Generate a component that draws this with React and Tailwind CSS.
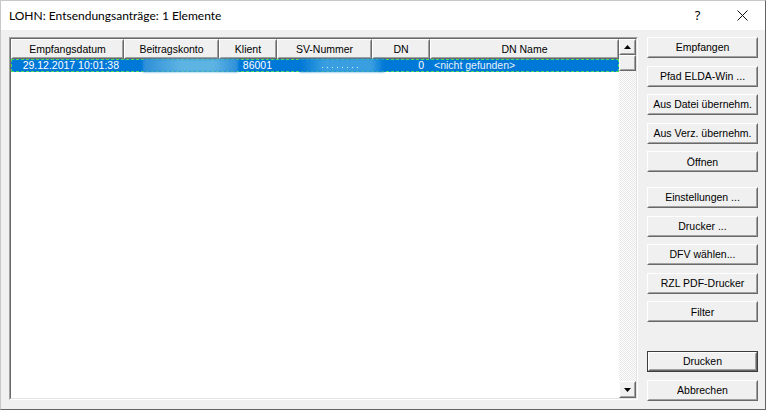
import React from 'react';

const columns = [
  { title: 'Empfangsdatum', w: 'w-[113px]' },
  { title: 'Beitragskonto', w: 'w-[95px]' },
  { title: 'Klient', w: 'w-[58px]' },
  { title: 'SV-Nummer', w: 'w-[95px]' },
  { title: 'DN', w: 'w-[58px]' },
  { title: 'DN Name', w: 'w-[189px]' },
];

function Raised({ className = '', children }) {
  return (
    <div className={`border-t border-l border-t-white border-l-white border-r border-b border-r-[#696969] border-b-[#696969] bg-[#f0f0f0] ${className}`}>
      <div className="flex h-full w-full items-center justify-center border-t border-l border-t-[#f0f0f0] border-l-[#f0f0f0] border-r border-b border-r-[#a0a0a0] border-b-[#a0a0a0]">
        {children}
      </div>
    </div>
  );
}

function Btn({ label, isDefault, className = '' }) {
  if (isDefault) {
    return (
      <div className={`h-[21px] w-[111px] border border-[#3c3c3c] ${className}`}>
        <Raised className="h-full w-full">
          <span className="text-[10.5px] leading-none text-black">{label}</span>
        </Raised>
      </div>
    );
  }
  return (
    <Raised className={`h-[21px] w-[111px] ${className}`}>
      <span className="text-[10.5px] leading-none text-black">{label}</span>
    </Raised>
  );
}

function Arrow({ down }) {
  return (
    <svg width="7" height="4" viewBox="0 0 7 4">
      <path d={down ? 'M0 0h7L3.5 4z' : 'M0 4h7L3.5 0z'} fill="#000" />
    </svg>
  );
}

export default function App() {
  return (
    <div className="flex h-[410px] w-[766px] flex-col overflow-hidden border border-t-[#c8c8c8] border-l-[#c8c8c8] border-r-[#646464] border-b-[#646464] bg-[#f0f0f0] font-['Liberation_Sans',Arial,sans-serif]">
      {/* title bar */}
      <div className="flex h-[29px] shrink-0 items-center bg-white">
        <span className="ml-[8px] font-['Lato',sans-serif] text-[12px] text-black">
          LOHN: Entsendungsanträge: 1 Elemente
        </span>
        <div className="ml-auto flex h-full">
          <div className="flex w-[45px] items-center justify-center font-['Noto_Sans',sans-serif] text-[13px] text-black">?</div>
          <div className="flex w-[45px] items-center justify-center">
            <svg width="11" height="11" viewBox="0 0 11 11">
              <path d="M0.5 0.5l10 10M10.5 0.5l-10 10" stroke="#111" strokeWidth="1" />
            </svg>
          </div>
        </div>
      </div>

      <div className="flex flex-1 pt-[7px] pl-[8px]">
        {/* list box */}
        <div className="h-[363px] w-[629px] border-t border-l border-t-[#a0a0a0] border-l-[#a0a0a0] border-r border-b border-r-white border-b-white">
          <div className="flex h-full w-full border-t border-l border-t-[#696969] border-l-[#696969] border-r border-b border-r-[#e3e3e3] border-b-[#e3e3e3] bg-white">
            <div className="flex w-[608px] flex-col">
              <div className="flex h-[20px]">
                {columns.map((c) => (
                  <Raised key={c.title} className={`${c.w} h-full`}>
                    <span className="text-[10.5px] leading-none text-black">{c.title}</span>
                  </Raised>
                ))}
              </div>
              <div className="relative flex h-[13px] items-center border border-dashed border-[#4cd964] bg-[#0078d7] text-[10.5px] leading-none text-white">
                <div className="w-[112px] pr-[5px] text-right">29.12.2017 10:01:38</div>
                <div className="w-[95px]" />
                <div className="w-[58px] pr-[5px] text-right">86001</div>
                <div className="w-[95px]" />
                <div className="w-[58px] pr-[6px] text-right">0</div>
                <div className="pl-[4px] text-[#e8f2fb]">&lt;nicht gefunden&gt;</div>
                {/* redacted values */}
                <div className="absolute top-[-1px] left-[131px] h-[13px] w-[95px] bg-[linear-gradient(90deg,#2d8fd9,#5db3e2_40%,#5db3e2_75%,#2d8fd9)] blur-[1px]" />
                <div className="absolute top-[-1px] left-[288px] h-[13px] w-[84px] bg-[linear-gradient(90deg,#0078d7,#3a9fe0_30%,#3a9fe0_85%,#0078d7)] blur-[1px]" />
                <div className="absolute top-[7px] left-[310px] flex gap-[4px]">
                  {[0, 1, 2, 3, 4, 5, 6, 7].map((i) => (
                    <span key={i} className="h-[1px] w-[1px] bg-[#d8ecfa]" />
                  ))}
                </div>
              </div>
            </div>
            {/* scrollbar */}
            <div className="flex w-[17px] flex-col">
              <Raised className="h-[16px] w-[17px]">
                <Arrow />
              </Raised>
              <Raised className="h-[16px] w-[17px]" />
              <div className="flex-1 bg-[repeating-conic-gradient(#ffffff_0_25%,#e6e6e6_0_50%)] bg-[length:2px_2px]" />
              <Raised className="h-[17px] w-[17px]">
                <Arrow down />
              </Raised>
            </div>
          </div>
        </div>

        {/* buttons */}
        <div className="ml-[9px] flex flex-col">
          <div className="flex flex-col gap-[7.6px]">
            <Btn label="Empfangen" />
            <Btn label="Pfad ELDA-Win ..." />
            <Btn label="Aus Datei übernehm." />
            <Btn label="Aus Verz. übernehm." />
            <Btn label="Öffnen" />
          </div>
          <div className="mt-[14.6px] flex flex-col gap-[7.6px]">
            <Btn label="Einstellungen ..." />
            <Btn label="Drucker ..." />
            <Btn label="DFV wählen..." />
            <Btn label="RZL PDF-Drucker" />
            <Btn label="Filter" />
          </div>
          <div className="mt-[28.6px] flex flex-col gap-[7.6px]">
            <Btn label="Drucken" isDefault />
            <Btn label="Abbrechen" />
          </div>
        </div>
      </div>
    </div>
  );
}
